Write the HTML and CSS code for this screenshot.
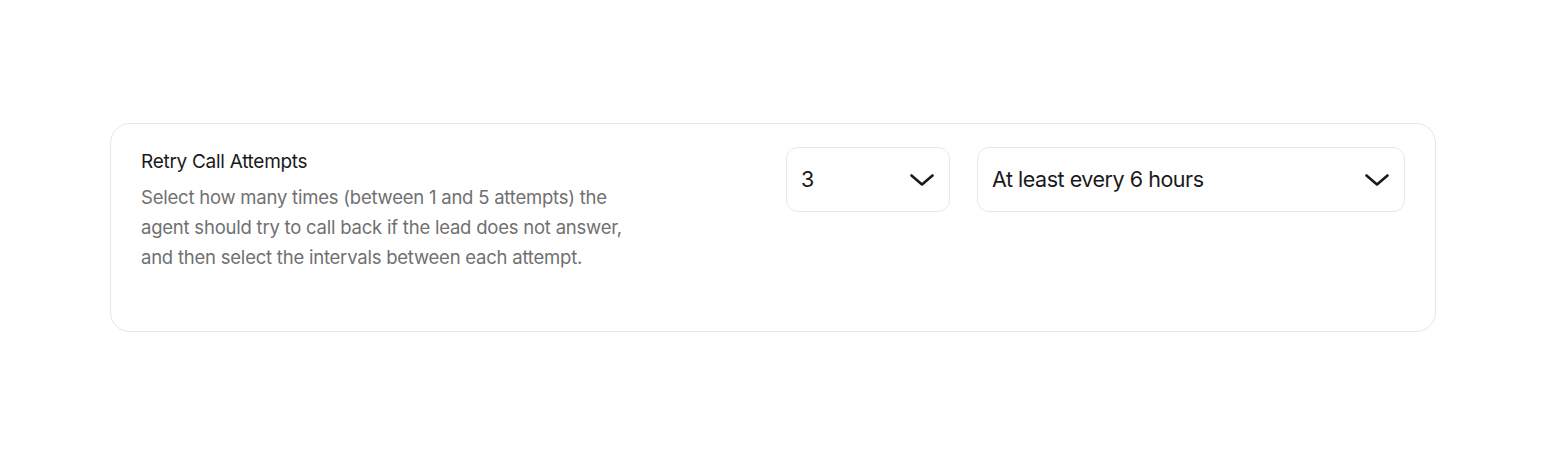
FILE: index.html
```html
<!DOCTYPE html>
<html lang="en">
<head>
<meta charset="utf-8">
<title>Retry Call Attempts</title>
<link rel="stylesheet" href="styles.css">
</head>
<body>
<main class="page">
  <section class="card">
    <div class="info">
      <h2 class="title">Retry Call Attempts</h2>
      <p class="desc">Select how many times (between 1 and 5 attempts) the agent should try to call back if the lead does not answer, and then select the intervals between each attempt.</p>
    </div>
    <div class="controls">
      <div class="select select-count">
        <span class="value">3</span>
        <svg class="chev" viewBox="0 0 24 12" width="24" height="12" aria-hidden="true"><path d="M1.5 1.5 L12 10.5 L22.5 1.5" fill="none" stroke="#1a1a1a" stroke-width="2.6" stroke-linecap="round" stroke-linejoin="round"/></svg>
      </div>
      <div class="select select-interval">
        <span class="value">At least every 6 hours</span>
        <svg class="chev" viewBox="0 0 24 12" width="24" height="12" aria-hidden="true"><path d="M1.5 1.5 L12 10.5 L22.5 1.5" fill="none" stroke="#1a1a1a" stroke-width="2.6" stroke-linecap="round" stroke-linejoin="round"/></svg>
      </div>
    </div>
  </section>
</main>
</body>
</html>
```

FILE: styles.css
```css
* { box-sizing: border-box; }
html, body { margin: 0; padding: 0; background: #ffffff; }
body {
  font-family: Inter, "Liberation Sans", sans-serif;
  color: #1a1a1a;
}
.page {
  padding: 123px 126px 0 110px;
}
.card {
  width: 1326px;
  height: 209px;
  border: 1.5px solid #e6e6e6;
  border-radius: 20px;
  padding: 23px 30px 0 30px;
  display: flex;
  justify-content: space-between;
  align-items: flex-start;
}
.info { width: 492px; }
.title {
  margin: 3px 0 0 0;
  font-size: 19px;
  font-weight: 400;
  line-height: 24px;
  letter-spacing: -0.015em;
  color: #1a1a1a;
}
.desc {
  margin: 8px 0 0 0;
  font-size: 18.5px;
  line-height: 30px;
  letter-spacing: -0.012em;
  color: #707070;
}
.controls {
  display: flex;
  gap: 27px;
}
.select {
  height: 65px;
  border: 1.5px solid #e8e8e8;
  border-radius: 12px;
  display: flex;
  align-items: center;
  justify-content: space-between;
  padding: 0 15px 2px 14px;
  font-size: 21.5px;
  letter-spacing: -0.022em;
  color: #1a1a1a;
}
.select-count { width: 164px; }
.select-interval { width: 428px; }
.chev { display: block; margin-top: 2px; }
```
